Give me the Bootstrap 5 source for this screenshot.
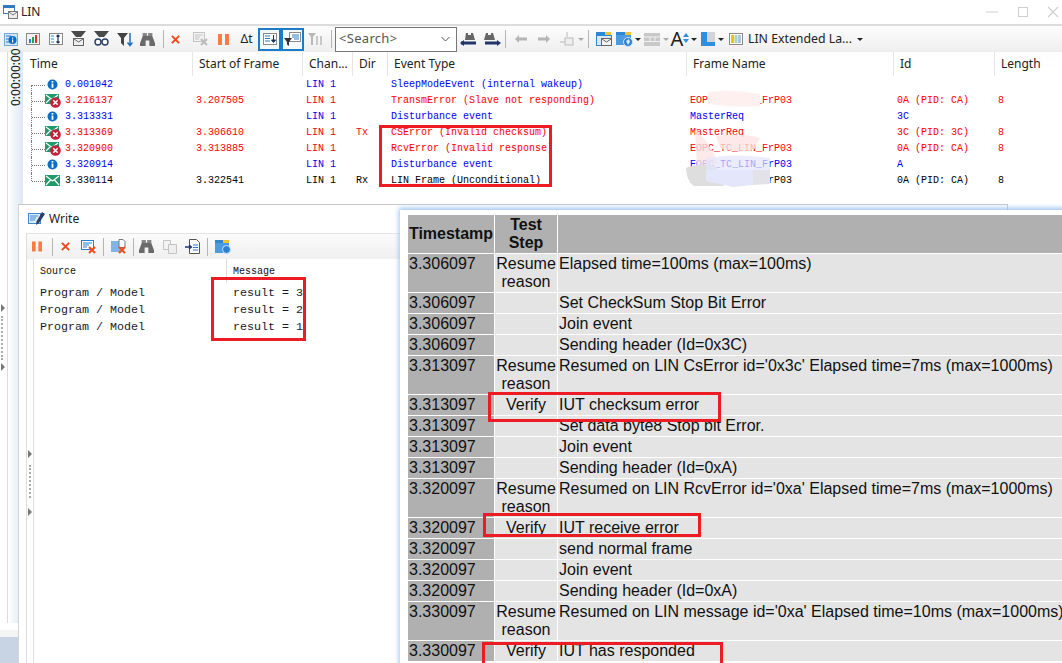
<!DOCTYPE html>
<html lang="en">
<head>
<meta charset="utf-8">
<title>LIN</title>
<link href="https://cdn.jsdelivr.net/npm/bootstrap@5.3.0/dist/css/bootstrap.min.css" rel="stylesheet">
<style>
html,body{width:1062px;height:663px;overflow:hidden;background:#fff}
body{font-family:"Noto Sans","Liberation Sans",sans-serif;font-size:12px;color:#222;line-height:1.2}
.app{width:1062px;height:663px}
.title-bar{height:26px;border-bottom:2px solid #dcdcdc;padding-left:3px}
.title-bar .ttl{margin-left:3px}
.win-ctl{margin-left:auto;gap:17px;padding-right:2px}
.tool-main{height:26px;background:linear-gradient(#fdfdfd,#eeeeee)}
.tbb{width:23px;height:24px;flex:none}
.tbb.first{width:21px}
.tbb.w22{width:22px}.tbb.w21{width:21px}.tbb.w20{width:20px}
.tbb.on{border:2px solid #1c7cc8;background:#f4f9fd;height:23px}
.tb-sep{width:1px;height:18px;background:#b5b5b5;flex:none}
.ms4{margin-left:4px}.me3{margin-right:3px}.ms2{margin-left:2px}.ms6{margin-left:6px}
.caret-d{width:0;height:0;border-left:3px solid transparent;border-right:3px solid transparent;border-top:3px solid #222;flex:none}
.caret-g{border-top-color:#aaa}
.searchbox{width:122px;height:25px;border:1px solid #777;background:#fff;padding:0 6px 0 3px;font-size:13px;color:#555;letter-spacing:.3px;margin:0 0 0 3px;flex:none}
.lay-lbl{font-size:12.3px;color:#222;white-space:nowrap;margin:0 5px 0 1px}
.lin-body{flex:1 1 0;min-height:0}
.strip{width:16px;margin-left:7px;border-left:1px solid #dcdcdc;background:linear-gradient(90deg,#fff,#dde7f3);height:571px;flex:none}
.strip-txt{writing-mode:vertical-rl;transform:rotate(180deg);font-size:12px;height:52px;margin-top:2px;color:#111;text-align:left;line-height:14px;padding-right:1px}
.foot-band{width:18px;height:33px;background:#c8d3e3;border-top:7px solid #f4f4f4;box-sizing:border-box;flex:none;margin-top:-1px}
.list-head{display:grid;grid-template-columns:169px 110px 50px 35px 299px 207px 101px 68px;height:25px}
.list-head>div{border-left:1px solid #e6e6e6;padding-left:6px;font-size:12px;line-height:23px;white-space:nowrap;overflow:hidden;height:24px}
.list-head>div:first-child{border-left:0;padding-left:7px}
.list-row{display:grid;grid-template-columns:42px 131px 110px 50px 35px 299px 207px 101px 45px;height:16px;font-family:"Liberation Mono",monospace;font-size:10px;line-height:16px;white-space:pre}
.c-b{color:#0000ff}.c-r{color:#ff0000}.c-k{color:#000}
.tree{position:relative;padding-left:22px}
.tree::before{content:"";position:absolute;left:8px;top:0;bottom:0;border-left:1px dotted #777}
.tree::after{content:"";position:absolute;left:9px;top:8px;width:13px;border-top:1px dotted #777}
.tree.t-first::before{top:8px}.tree.t-last::before{bottom:8px}
.blur-art{position:absolute;left:680px;top:88px}
.write-win{position:absolute;left:18px;top:204px;width:990px;height:460px;background:#fff;border-top:1px solid #c8c8c8;border-left:1px solid #d5d5d5;border-right:1px solid #c8c8c8}
.wr-title{height:28px;padding-left:9px;font-size:12px}
.wr-title span{margin-left:4px}
.wr-panel{margin-left:7px;border-left:1px solid #dcdcdc;border-top:1px solid #e4e4e4;height:431px}
.wr-tools{height:25px;background:linear-gradient(#fbfbfb,#f0f0f0)}
.wr-tools .tbb{width:21px;height:22px}
.wr-tools .tbb.wp{width:19px}
.wr-main{height:405px}
.rail{width:6px;padding-top:191px;flex:none;padding-left:1px}
.tri-r{width:0;height:0;border-top:4px solid transparent;border-bottom:4px solid transparent;border-left:4px solid #777}
.dots-v{width:2px;height:33px;margin:7px 0 10px 1px;border-left:2px dotted #aaa}
.wr-list{flex:1 1 auto;border-left:1px solid #dcdcdc}
.wr-head,.wr-row{display:grid;grid-template-columns:192px 300px;font-family:"Liberation Mono",monospace;white-space:pre}
.wr-head{height:26px;font-size:10px;line-height:25px;color:#111}
.wr-head>div{padding-left:6px;height:24px}
.wr-head>div+div{border-left:1px solid #dcdcdc}
.wr-row{height:17px;font-size:11.67px;line-height:17px;color:#1a1a2a}
.wr-row>div{padding-left:6px}
.wr-row>div+div{padding-left:7px}
.side-handle{position:absolute;left:1px;top:304px}
.side-handle .dots-v{height:44px;margin:4px 0 3px 0}
.rpt-wrap{position:absolute;left:400px;top:210px;width:670px;height:460px;background:#fff;padding:5px 0 0 8px;box-shadow:-1px -2px 5px #9cc3f2;overflow:hidden}
.rpt{border-collapse:separate;border-spacing:1px;table-layout:fixed;width:656px;font-family:"Liberation Sans",Arial,sans-serif;font-size:16px;line-height:18px;color:#111;margin:-1px 0 0 -1px}
.rpt th,.rpt td{padding:1px;background:#e4e4e4;overflow:visible;white-space:nowrap;vertical-align:middle}
.rpt th{background:#b0b0b0;font-weight:700;text-align:center;height:38px;padding:0}
.rpt td{height:20px;padding:0 1px}
.rpt td.ts{background:#b0b0b0}
.rpt td.st{text-align:center;padding:0}
.rpt .two td{height:38px;vertical-align:top;padding-top:1px}
.rpt .w1{width:86px}.rpt .w2{width:62px}.rpt .w3{width:505px}
.mark-box{position:absolute;border:3px solid #ed1c24}
.mb1{left:379px;top:125px;width:173px;height:62px}
.mb2{left:211px;top:277px;width:95px;height:64px}
.mb3{left:488px;top:392px;width:233px;height:30px}
.mb4{left:483px;top:513px;width:218px;height:24px}
.mb5{left:482px;top:642px;width:241px;height:40px}
</style>
</head>
<body>
<svg width="0" height="0" class="position-absolute">
<defs>
<symbol id="s-info" viewBox="0 0 12 12"><circle cx="6" cy="6" r="5.5" fill="#0a6cc4"/><rect x="5" y="2.2" width="2" height="1.8" fill="#fff"/><rect x="5" y="5" width="2" height="4.6" fill="#fff"/></symbol>
<symbol id="s-mail" viewBox="0 0 15 11"><rect width="15" height="11" fill="#1f9a68"/><path d="M1 1l6.5 5L14 1M1 10l4.5-5M14 10L9.500 5" stroke="#fff" stroke-width="1.200" fill="none"/></symbol>
<symbol id="s-mailerr" viewBox="0 0 16 15"><rect y="1" width="14" height="10" fill="#1f9a68"/><path d="M1 2l6 4.500L13 2M1 10l4-4" stroke="#fff" stroke-width="1.200" fill="none"/><circle cx="10.500" cy="9.500" r="5.300" fill="#c4203c"/><path d="M8.300 7.300l4.400 4.400M12.700 7.300l-4.400 4.400" stroke="#fff" stroke-width="1.500"/></symbol>
<symbol id="s-bino" viewBox="0 0 16 16"><path d="M3 1h4v3h2V1h4v3l3 8v3h-6V9H6v6H0v-3l3-8z" fill="#6a6a6a"/><path d="M3 1h4v3H3zM9 1h4v3H9z" fill="#888"/></symbol>
<symbol id="s-x" viewBox="0 0 10 10"><path d="M1 1l8 8M9 1L1 9" stroke="#ef4a1e" stroke-width="2.200"/></symbol>
<symbol id="s-pause" viewBox="0 0 11 11"><rect width="4" height="11" fill="#fb7b45"/><rect x="7" width="4" height="11" fill="#fb7b45"/></symbol>
</defs>
</svg>

<div class="app d-flex flex-column">
  <div class="title-bar d-flex align-items-center">
    <svg width="15" height="14" viewBox="0 0 15 14"><rect x=".5" y=".5" width="11" height="8" fill="#fff" stroke="#3b7dbf"/><rect x=".5" y=".5" width="11" height="2.500" fill="#2f78c4"/><rect x="5.500" y="6.500" width="9" height="7" fill="#eee" stroke="#777"/><path d="M6 7l4 3 4-3" stroke="#777" fill="none"/></svg>
    <span class="ttl">LIN</span>
    <div class="win-ctl d-flex align-items-center">
      <svg width="13" height="10" viewBox="0 0 13 10"><path d="M0 5h12" stroke="#cfcfcf"/></svg>
      <svg width="14" height="10" viewBox="0 0 14 10"><rect x="2.500" y=".5" width="9" height="9" fill="none" stroke="#cfcfcf"/></svg>
      <svg width="13" height="12" viewBox="0 0 13 12"><path d="M1 1l10 10M11 1L1 11" stroke="#cfcfcf" stroke-width="1.200"/></svg>
    </div>
  </div>
  <div class="tool-main d-flex align-items-center">
    <div class="tbb first d-flex align-items-center justify-content-center"><svg width="14" height="13" viewBox="0 0 14 13"><rect x=".5" y=".5" width="13" height="12" fill="#d3e6f7" stroke="#7aa6cf"/><path d="M2 3h5M2 6h3M2 9h3" stroke="#2d7cc8"/><circle cx="8.500" cy="7" r="4" fill="#0a6cc4"/><rect x="8" y="4.500" width="1.200" height="1.200" fill="#fff"/><rect x="8" y="6.500" width="1.200" height="3" fill="#fff"/></svg></div>
    <div class="tbb d-flex align-items-center justify-content-center"><svg width="14" height="12" viewBox="0 0 14 12"><rect x=".5" y=".5" width="13" height="11" fill="#f2f2f2" stroke="#888"/><rect x="3" y="6" width="2" height="4" fill="#2a7fd0"/><rect x="6" y="4" width="2" height="6" fill="#2f9e44"/><rect x="9" y="2" width="2" height="8" fill="#d9342b"/></svg></div>
    <div class="tbb d-flex align-items-center justify-content-center"><svg width="14" height="12" viewBox="0 0 14 12"><rect x=".5" y=".5" width="13" height="11" fill="#fff" stroke="#888"/><path d="M2 3h3M2 6h3M2 9h3" stroke="#2d8fe0"/><path d="M9 2v8M7.500 3.500L9 2l1.500 1.500M7.500 8.500L9 10l1.500-1.500" stroke="#1f2f55" fill="none" stroke-width="1.200"/></svg></div>
    <div class="tbb d-flex align-items-center justify-content-center"><svg width="15" height="16" viewBox="0 0 15 16"><path d="M0 0h15l-5 6H5z" fill="#4a4a4a"/><rect x="2.500" y="7.500" width="10" height="7" fill="#eee" stroke="#666"/><path d="M3 8l4.500 3L12 8" stroke="#666" fill="none"/></svg></div>
    <div class="tbb d-flex align-items-center justify-content-center"><svg width="15" height="16" viewBox="0 0 15 16"><path d="M0 0h15l-5 6H5z" fill="#4a4a4a"/><circle cx="4" cy="11" r="3" fill="#fff" stroke="#2b3f66" stroke-width="1.400"/><circle cx="11" cy="11" r="3" fill="#fff" stroke="#2b3f66" stroke-width="1.400"/></svg></div>
    <div class="tbb d-flex align-items-center justify-content-center"><svg width="16" height="15" viewBox="0 0 16 15"><path d="M0 1h11L7 6v8L4 11V6z" fill="#444"/><path d="M13 1v12M10.500 10.500L13 13.500l2.500-3" stroke="#1f6fc0" stroke-width="1.500" fill="none"/></svg></div>
    <div class="tbb d-flex align-items-center justify-content-center"><svg width="15" height="15"><use href="#s-bino"/></svg></div>
    <div class="tb-sep ms4"></div>
    <div class="tbb d-flex align-items-center justify-content-center"><svg width="9" height="9"><use href="#s-x"/></svg></div>
    <div class="tbb d-flex align-items-center justify-content-center ms2"><svg width="15" height="14" viewBox="0 0 15 14"><rect x=".5" y=".5" width="11" height="9" fill="#f2f2f2" stroke="#c4c4c4"/><path d="M2 3h8M2 5h5M2 7h4" stroke="#c4c4c4"/><path d="M8 7l6 6M14 7l-6 6" stroke="#bbb" stroke-width="2"/></svg></div>
    <div class="tbb d-flex align-items-center justify-content-center"><svg width="11" height="11"><use href="#s-pause"/></svg></div>
    <div class="tbb d-flex align-items-center justify-content-center">Δt</div>
    <div class="tbb on d-flex align-items-center justify-content-center"><svg width="14" height="12" viewBox="0 0 14 12"><rect x=".5" y=".5" width="13" height="11" fill="#fff" stroke="#8b8b8b"/><path d="M2 3h5M2 5.500h5M2 8h5" stroke="#2d7cc8"/><path d="M10.500 2v7M8.500 7l2 2.500 2-2.500z" stroke="#1f2f55" fill="#1f2f55"/></svg></div>
    <div class="tbb on d-flex align-items-center justify-content-center"><svg width="17" height="14" viewBox="0 0 17 14"><rect x="5.500" y=".5" width="11" height="9" fill="#fff" stroke="#8b8b8b"/><path d="M8 3h7M8 5h7M10 7h5" stroke="#2d7cc8"/><path d="M0 6h8L5 10v4l-2-1.500V10z" fill="#333"/></svg></div>
    <div class="tbb d-flex align-items-center justify-content-center"><svg width="15" height="13" viewBox="0 0 15 13"><path d="M0 0h8L5 4v8H3V4z" fill="#b8b8b8"/><rect x="8" y="3" width="2" height="9" fill="#c8c8c8"/><rect x="12" y="3" width="2" height="9" fill="#c8c8c8"/></svg></div>
    <div class="tb-sep ms4"></div>
    <div class="searchbox d-flex align-items-center justify-content-between"><span>&lt;Search&gt;</span><svg width="9" height="6" viewBox="0 0 9 6"><path d="M.5 1l4 4 4-4" stroke="#555" fill="none"/></svg></div>
    <div class="tbb d-flex align-items-center justify-content-center"><svg width="18" height="15" viewBox="0 0 18 15"><path d="M6 1h2v2h3V1h2l2 7H5z" fill="#666"/><path d="M1 11h15" stroke="#22356b" stroke-width="3"/><path d="M0 11l4-3v6z" fill="#22356b"/></svg></div>
    <div class="tbb d-flex align-items-center justify-content-center"><svg width="18" height="15" viewBox="0 0 18 15"><path d="M3 1h2v2h3V1h2l2 7H1z" fill="#666"/><path d="M2 11h13" stroke="#22356b" stroke-width="3"/><path d="M18 11l-4-3v6z" fill="#22356b"/></svg></div>
    <div class="tb-sep ms2 me3"></div>
    <div class="tbb d-flex align-items-center justify-content-center"><svg width="12" height="8" viewBox="0 0 12 8"><path d="M0 4l4-4v2.500h8v3H4V8z" fill="#b5b5b5"/></svg></div>
    <div class="tbb d-flex align-items-center justify-content-center"><svg width="12" height="8" viewBox="0 0 12 8"><path d="M12 4L8 0v2.500H0v3h8V8z" fill="#b5b5b5"/></svg></div>
    <div class="tbb d-flex align-items-center justify-content-center"><svg width="14" height="14" viewBox="0 0 14 14"><path d="M7 0v5M0 10h5" stroke="#bbb"/><rect x="5" y="6" width="8" height="7" fill="#eee" stroke="#bbb"/></svg></div>
    <div class="caret-d caret-g"></div>
    <div class="tb-sep ms4 me3"></div>
    <div class="tbb d-flex align-items-center justify-content-center"><svg width="16" height="14" viewBox="0 0 16 14"><path d="M0 0h9v3H0z" fill="#2e86d4"/><path d="M9 0h6v3H9z" fill="#f1c232"/><rect x=".5" y="3.500" width="15" height="10" fill="#d7e9f9" stroke="#2e86d4"/><rect x="5.500" y="6.500" width="10" height="7" fill="#f3f3f3" stroke="#666"/><path d="M6 7l4.500 3L15 7" stroke="#666" fill="none"/></svg></div>
    <div class="tbb w20 d-flex align-items-center justify-content-center"><svg width="18" height="15" viewBox="0 0 18 15"><path d="M0 0h9v3H0z" fill="#2e86d4"/><path d="M9 0h6v3H9z" fill="#f1c232"/><rect y="3" width="15" height="10" fill="#4b9be0"/><circle cx="12" cy="10" r="4.500" fill="#2d7fd0" stroke="#cfe4f7"/><path d="M10 9l3-2 1 3-2 3z" fill="#d7e9f9"/></svg></div>
    <div class="caret-d"></div>
    <div class="tbb w22 d-flex align-items-center justify-content-center"><svg width="16" height="13" viewBox="0 0 16 13"><rect width="16" height="13" fill="#c8c8c8"/><path d="M0 4h16M0 8.500h16M6 4v4.500M11 4v4.500" stroke="#f2f2f2"/></svg></div>
    <div class="caret-d caret-g"></div>
    <div class="tbb w22 d-flex align-items-center justify-content-center"><svg width="6" height="13" viewBox="0 0 6 13" class="order-2"><path d="M3 0l3 4H0zM3 10L0 6h6z" fill="#2d8fe0"/></svg><span class="fs-5 lh-1">A</span></div>
    <div class="caret-d"></div>
    <div class="tbb w21 d-flex align-items-center justify-content-center"><svg width="14" height="14" viewBox="0 0 14 14"><rect width="14" height="10" fill="#d4d4d4"/><rect width="6" height="10" fill="#2d8fe0"/><rect y="10" width="14" height="4" fill="#2d8fe0"/></svg></div>
    <div class="caret-d"></div>
    <div class="tbb d-flex align-items-center justify-content-center"><svg width="14" height="12" viewBox="0 0 14 12"><rect x=".5" y=".5" width="13" height="11" fill="#fff" stroke="#888"/><rect x="2" y="2" width="3" height="8" fill="#f5c400"/><rect x="5.500" y="2" width="3" height="8" fill="#a7d3c4"/><rect x="9" y="2" width="3" height="8" fill="#a9c7e4"/></svg></div>
    <span class="lay-lbl">LIN Extended La...</span>
    <div class="caret-d"></div>
  </div>

  <div class="lin-body d-flex">
    <div class="d-flex flex-column">
      <div class="strip"><div class="strip-txt">0:00:00:00</div></div>
    </div>
    <div class="flex-grow-1">
      <div class="list-head">
        <div>Time</div><div>Start of Frame</div><div>Chan...</div><div>Dir</div><div>Event Type</div><div>Frame Name</div><div>Id</div><div>Length</div>
      </div>
      <div class="list-row c-b"><div class="tree t-first"><svg width="11" height="11" class="ms2"><use href="#s-info"/></svg></div><div>0.001042</div><div></div><div>LIN 1</div><div></div><div>SleepModeEvent (internal wakeup)</div><div></div><div></div><div></div></div>
      <div class="list-row c-r"><div class="tree"><svg width="16" height="15"><use href="#s-mailerr"/></svg></div><div>3.216137</div><div>3.207505</div><div>LIN 1</div><div></div><div>TransmError (Slave not responding)</div><div>EOPC_TC_LIN_FrP03</div><div>0A (PID: CA)</div><div>8</div></div>
      <div class="list-row c-b"><div class="tree"><svg width="11" height="11" class="ms2"><use href="#s-info"/></svg></div><div>3.313331</div><div></div><div>LIN 1</div><div></div><div>Disturbance event</div><div>MasterReq</div><div>3C</div><div></div></div>
      <div class="list-row c-r"><div class="tree"><svg width="16" height="15"><use href="#s-mailerr"/></svg></div><div>3.313369</div><div>3.306610</div><div>LIN 1</div><div>Tx</div><div>CSError (Invalid checksum)</div><div>MasterReq</div><div>3C (PID: 3C)</div><div>8</div></div>
      <div class="list-row c-r"><div class="tree"><svg width="16" height="15"><use href="#s-mailerr"/></svg></div><div>3.320900</div><div>3.313885</div><div>LIN 1</div><div></div><div>RcvError (Invalid response)</div><div>EOPC_TC_LIN_FrP03</div><div>0A (PID: CA)</div><div>8</div></div>
      <div class="list-row c-b"><div class="tree"><svg width="11" height="11" class="ms2"><use href="#s-info"/></svg></div><div>3.320914</div><div></div><div>LIN 1</div><div></div><div>Disturbance event</div><div>EOPC_TC_LIN_FrP03</div><div>A</div><div></div></div>
      <div class="list-row c-k"><div class="tree t-last"><svg width="15" height="11"><use href="#s-mail"/></svg></div><div>3.330114</div><div>3.322541</div><div>LIN 1</div><div>Rx</div><div>LIN Frame (Unconditional)</div><div>EOPC_TC_LIN_FrP03</div><div>0A (PID: CA)</div><div>8</div></div>
    </div>
  </div>
  <div class="foot-band"></div>
</div>

<svg class="blur-art" width="120" height="104" viewBox="0 0 120 104">
  <path d="M28 4q25-3 52 2v12q-26 2-52-2z" fill="#fff0f0"/>
  <path d="M15 42q12 8 24 34l-22 2z" fill="#fbe3e3" fill-opacity=".8"/>
  <path d="M36 48q25-4 44 2l-6 12q-18 4-34-2z" fill="#fde4e4" fill-opacity=".8"/>
  <path d="M6 80q12-6 30-2l8 20H14q-8-6-8-18z" fill="#dedede"/>
  <path d="M26 70q30-5 64 0v12H26z" fill="#e4e6fb" fill-opacity=".7"/>
  <path d="M26 82h47v15l-20 2-27-6z" fill="#e4e6fb"/>
  <path d="M73 82h17v14l-17 1z" fill="#e2e2e8"/>
</svg>

<div class="side-handle"><div class="tri-r"></div><div class="dots-v"></div><div class="tri-r"></div></div>

<div class="write-win">
  <div class="wr-title d-flex align-items-center">
    <svg width="17" height="15" viewBox="0 0 17 15"><rect x=".5" y="1.500" width="12" height="10" fill="#d9eaf9" stroke="#3f88cc"/><path d="M2 4h8M2 6h6M2 8h5" stroke="#3f88cc"/><path d="M14 0l3 2-6 9-3 2 .5-3.500z" fill="#2b3f66"/></svg>
    <span>Write</span>
  </div>
  <div class="wr-panel">
    <div class="wr-tools d-flex align-items-center">
      <div class="tbb wp d-flex align-items-center justify-content-center"><svg width="10" height="11"><use href="#s-pause"/></svg></div>
      <div class="tb-sep ms6"></div>
      <div class="tbb d-flex align-items-center justify-content-center ms2"><svg width="9" height="9"><use href="#s-x"/></svg></div>
      <div class="tbb d-flex align-items-center justify-content-center ms2"><svg width="15" height="14" viewBox="0 0 15 14"><rect x=".5" y=".5" width="12" height="9" fill="#fff" stroke="#2d7cc8"/><path d="M2 3h9M2 5h6M2 7h4" stroke="#2d7cc8"/><path d="M8 7l6 6M14 7l-6 6" stroke="#ef4a1e" stroke-width="2"/></svg></div>
      <div class="tb-sep ms4"></div>
      <div class="tbb d-flex align-items-center justify-content-center ms4"><svg width="16" height="15" viewBox="0 0 16 15"><rect y="2" width="9" height="11" fill="#7fb5e6"/><path d="M8 .5h4l2 2v6H8z" fill="#fff" stroke="#777"/><path d="M8 8l6 6M14 8l-6 6" stroke="#ef4a1e" stroke-width="2"/></svg></div>
      <div class="tb-sep ms4"></div>
      <div class="tbb d-flex align-items-center justify-content-center ms2"><svg width="15" height="15"><use href="#s-bino"/></svg></div>
      <div class="tbb d-flex align-items-center justify-content-center ms2"><svg width="14" height="14" viewBox="0 0 14 14"><path d="M.5.5h7v9h-7z" fill="#f3f3f3" stroke="#c4c4c4"/><path d="M5.500 4.500h8v9h-8z" fill="#eee" stroke="#c4c4c4"/></svg></div>
      <div class="tbb d-flex align-items-center justify-content-center ms2"><svg width="15" height="15" viewBox="0 0 15 15"><path d="M4.500.5h7l3 3v11h-10z" fill="#fff" stroke="#555"/><path d="M8 6h5M8 8.500h5M8 11h5" stroke="#2d7cc8"/><path d="M0 8h6M4 6l2.500 2L4 10" stroke="#22356b" stroke-width="1.300" fill="none"/></svg></div>
      <div class="tb-sep ms4"></div>
      <div class="tbb d-flex align-items-center justify-content-center ms4"><svg width="16" height="14" viewBox="0 0 16 14"><path d="M0 0h8v3H0z" fill="#2e86d4"/><path d="M8 0h6v3H8z" fill="#f1c232"/><rect y="3" width="14" height="10" fill="#4b9be0"/><circle cx="11.500" cy="9.500" r="4" fill="#2d7fd0" stroke="#cfe4f7"/></svg></div>
    </div>
    <div class="wr-main d-flex">
      <div class="rail"><div class="tri-r"></div><div class="dots-v"></div><div class="tri-r"></div></div>
      <div class="wr-list">
        <div class="wr-head"><div>Source</div><div>Message</div></div>
        <div class="wr-row"><div>Program / Model</div><div>result = 3</div></div>
        <div class="wr-row"><div>Program / Model</div><div>result = 2</div></div>
        <div class="wr-row"><div>Program / Model</div><div>result = 1</div></div>
      </div>
    </div>
  </div>
</div>

<div class="rpt-wrap">
  <table class="rpt">
    <colgroup><col class="w1"><col class="w2"><col class="w3"></colgroup>
    <tr><th>Timestamp</th><th>Test<br>Step</th><th></th></tr>
    <tr class="two"><td class="ts">3.306097</td><td class="st">Resume<br>reason</td><td>Elapsed time=100ms (max=100ms)</td></tr>
    <tr><td class="ts">3.306097</td><td class="st"></td><td>Set CheckSum Stop Bit Error</td></tr>
    <tr><td class="ts">3.306097</td><td class="st"></td><td>Join event</td></tr>
    <tr><td class="ts">3.306097</td><td class="st"></td><td>Sending header (Id=0x3C)</td></tr>
    <tr class="two"><td class="ts">3.313097</td><td class="st">Resume<br>reason</td><td>Resumed on LIN CsError id='0x3c' Elapsed time=7ms (max=1000ms)</td></tr>
    <tr><td class="ts">3.313097</td><td class="st">Verify</td><td>IUT checksum error</td></tr>
    <tr><td class="ts">3.313097</td><td class="st"></td><td>Set data byte8 Stop bit Error.</td></tr>
    <tr><td class="ts">3.313097</td><td class="st"></td><td>Join event</td></tr>
    <tr><td class="ts">3.313097</td><td class="st"></td><td>Sending header (Id=0xA)</td></tr>
    <tr class="two"><td class="ts">3.320097</td><td class="st">Resume<br>reason</td><td>Resumed on LIN RcvError id='0xa' Elapsed time=7ms (max=1000ms)</td></tr>
    <tr><td class="ts">3.320097</td><td class="st">Verify</td><td>IUT receive error</td></tr>
    <tr><td class="ts">3.320097</td><td class="st"></td><td>send normal frame</td></tr>
    <tr><td class="ts">3.320097</td><td class="st"></td><td>Join event</td></tr>
    <tr><td class="ts">3.320097</td><td class="st"></td><td>Sending header (Id=0xA)</td></tr>
    <tr class="two"><td class="ts">3.330097</td><td class="st">Resume<br>reason</td><td>Resumed on LIN message id='0xa' Elapsed time=10ms (max=1000ms)</td></tr>
    <tr><td class="ts">3.330097</td><td class="st">Verify</td><td>IUT has responded</td></tr>
  </table>
</div>

<div class="mark-box mb1"></div>
<div class="mark-box mb2"></div>
<div class="mark-box mb3"></div>
<div class="mark-box mb4"></div>
<div class="mark-box mb5"></div>

<script src="https://cdn.jsdelivr.net/npm/bootstrap@5.3.0/dist/js/bootstrap.bundle.min.js"></script>
</body>
</html>
